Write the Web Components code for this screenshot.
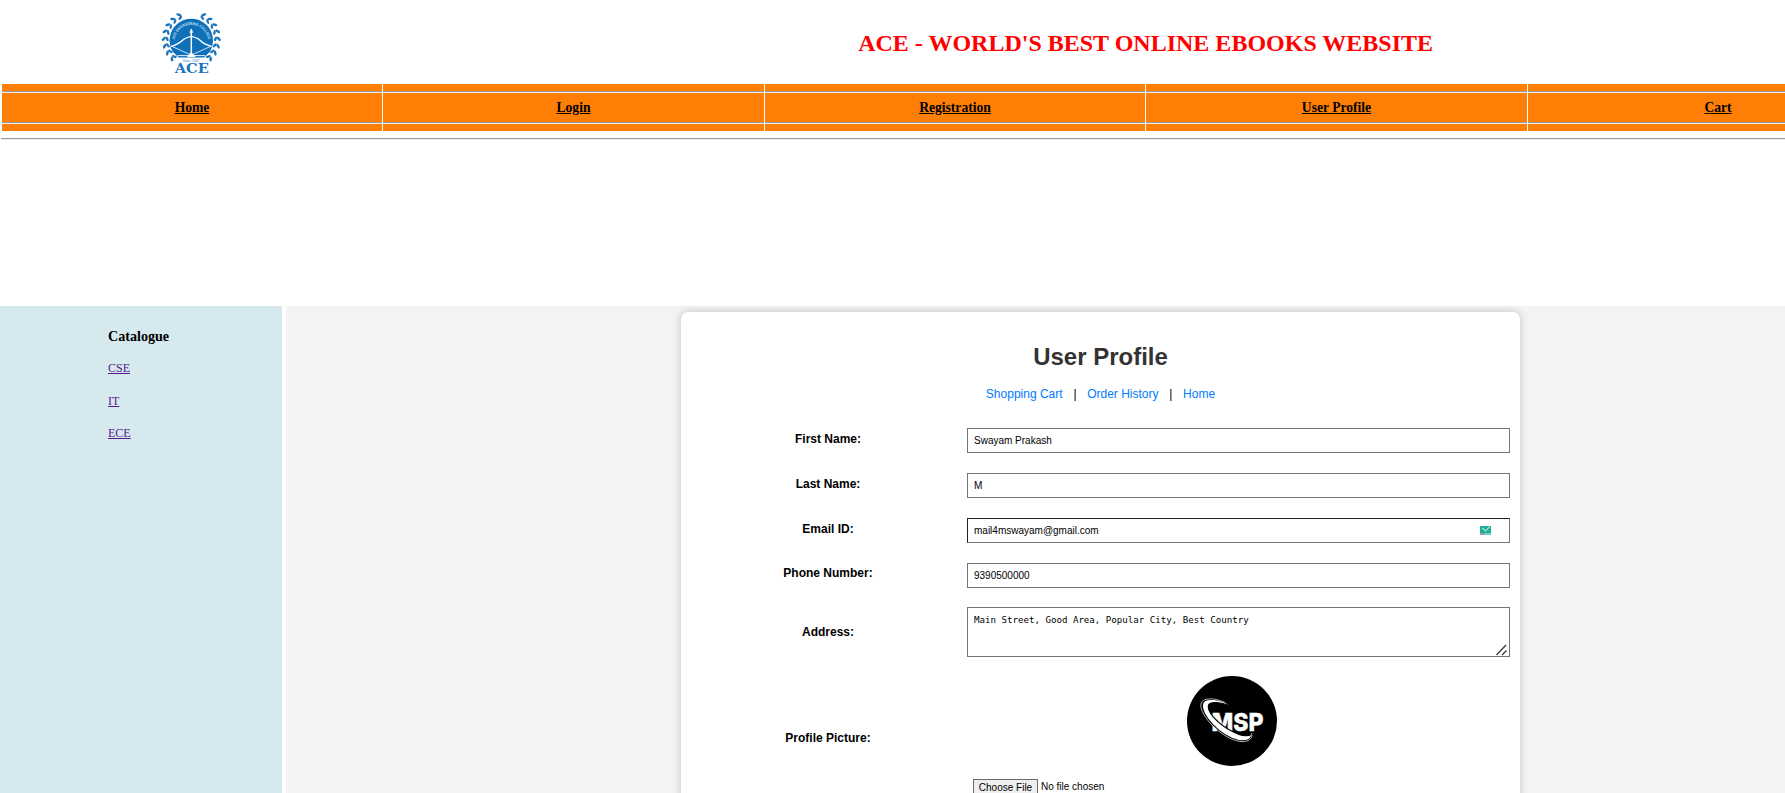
<!DOCTYPE html>
<html lang="en">
<head>
<meta charset="utf-8">
<title>User Profile</title>
<style>
html, body { margin: 0; height: 100%; overflow: hidden; background: #fff; color: #000; font-family: "Liberation Serif", "Times New Roman", serif; }
</style>
</head>
<body>
<ebook-page></ebook-page>
<script>
const define = (name, html) => customElements.define(name, class extends HTMLElement {
  constructor() {
    super();
    const t = document.createElement('template');
    t.innerHTML = typeof html === 'function' ? html(this) : html;
    this.attachShadow({ mode: 'open' }).appendChild(t.content.cloneNode(true));
  }
});

/* College crest: laurel leaves round a blue disc with bow and arrow */
const leaves = (() => {
  let out = '';
  for (let i = 0; i < 8; i++) {
    const deg = 27 + i * 15.5;
    for (const s of [-1, 1]) {
      out += `<g transform="translate(30.3 31.3) rotate(${s * deg})"><ellipse cx="0" cy="-24.2" rx="2.6" ry="1.2" transform="rotate(${s * 28} 0 -24.2)"/><ellipse cx="0" cy="-27.6" rx="2.6" ry="1.3" transform="rotate(${s * -42} 0 -27.6)"/></g>`;
    }
  }
  return out;
})();

define('ace-logo', `
<style>:host{display:block;width:62px;height:70px} svg{display:block;overflow:visible}</style>
<svg width="62" height="70" viewBox="0 0 62 70">
  <g fill="#1a74bb">${leaves}</g>
  <path d="M12 44 A21.7 21.7 0 1 1 48.6 44 L43 49.5 H17.6 Z" fill="#0e70b9"/>
  <path id="arc" d="M13.3 34 A17 17 0 1 1 47.3 34" fill="none"/>
  <text font-family="Liberation Sans, sans-serif" font-weight="bold" font-size="3.9" fill="#c4e0f3"><textPath href="#arc" startOffset="2.5" textLength="48" lengthAdjust="spacingAndGlyphs">ACE ENGINEERING COLLEGE</textPath></text>
  <g fill="none" stroke="#fff" transform="translate(-.5 0)">
    <path d="M30.8 22 V48" stroke-width="1.5"/>
    <path d="M29.3 24.5 L30.8 20.8 L32.3 24.5 Z" fill="#fff" stroke-width=".5"/>
    <path d="M10.5 38.5 C16 36.8 18.5 35.5 21.5 32.8 C24 30 27 29.3 30.8 28.4 C34.6 29.3 37.6 30 40.1 32.8 C42.6 35.5 45.6 36.8 51.1 38.5" stroke-width="1.4"/>
    <path d="M11.5 38.4 L28.7 46.2 M50.1 38.4 L32.9 46.2" stroke-width=".8"/>
    <path d="M17 47.6 H44.6" stroke-width=".9"/>
    <path d="M26.5 49 L30.8 43.5 L35.1 49 Z" fill="#fff" stroke="none"/>
  </g>
  <text x="30.3" y="54.1" text-anchor="middle" textLength="17" font-family="Liberation Serif, serif" font-size="4" fill="#4c91c8">Since 2007</text>
  <text x="13.8" y="65.4" textLength="34" lengthAdjust="spacingAndGlyphs" font-family="DejaVu Serif, serif" font-weight="bold" font-size="12.2" fill="#1b75bb">ACE</text>
</svg>`);

define('site-header', `
<style>
:host{display:grid;grid-template-columns:380.7px 1fr;column-gap:1px;width:1905.5px;height:84px;margin-left:2px}
ace-logo{margin:8px 0 0 158.5px}
h1{margin:0;padding-top:29px;font-size:24px;line-height:28px;color:#f00;text-align:center;font-weight:bold}
</style>
<ace-logo></ace-logo><h1><slot></slot></h1>`);

define('nav-cell', el => `
<style>
:host{display:grid;grid-template-rows:7px 2px 29px 2px 7px;background:#ff7f06;text-align:center}
.rule{background:linear-gradient(#9a9a9a 50%,#eee 50%)}
a{grid-row:3;font-weight:bold;font-size:13.6px;line-height:29px;color:#000;text-decoration:underline}
.a{grid-row:2}.b{grid-row:4}
</style>
<div class="rule a"></div><a href="#"><slot></slot></a><div class="rule b"></div>`);

define('site-nav', `
<style>
:host{display:block}
nav{display:grid;grid-template-columns:380px 381px 380px 381px 380px;column-gap:1px;margin-left:2px}
.line{margin:7px 0 0 1px;height:2px;background:linear-gradient(#9a9a9a 50%,#eee 50%)}
</style>
<nav><slot></slot></nav><div class="line"></div>`);

define('catalogue-menu', `
<style>
:host{display:block;box-sizing:border-box;background:#d6e9ef;padding:22px 0 0 108px}
h3{margin:0 0 16px;font-size:14.1px;line-height:17px;font-weight:bold}
ul{list-style:none;margin:0;padding:0;display:grid;row-gap:18.5px}
li{font-size:12px;line-height:14px}
a{color:#551a8b;text-decoration:underline}
</style>
<h3>Catalogue</h3>
<ul><li><a href="#">CSE</a></li><li><a href="#">IT</a></li><li><a href="#">ECE</a></li></ul>`);

define('form-row', el => `
<style>
:host{display:grid;grid-template-columns:277px 543px;column-gap:0;align-items:start}
label{font-weight:bold;font-size:12px;line-height:14px;text-align:center;padding:var(--label-top,4px) 1px 0 0}
</style>
<label>${el.getAttribute('label')}</label><div><slot></slot></div>`);

define('text-field', el => `
<style>
:host{display:block;position:relative;height:25px}
input{box-sizing:border-box;display:block;width:100%;height:25px;margin:0;padding:0 6px;border:1px solid #767676;border-radius:0;font:10px "Liberation Sans",Arial,sans-serif;color:#000;background:#fff;outline:0}
:host([inset]) input{border-color:#222 #767676 #767676 #222}
::slotted(*){position:absolute;right:18px;top:6px}
</style>
<input type="text" value="${el.getAttribute('value')}"><slot></slot>`);

define('mail-badge', `
<style>:host{display:block} svg{display:block}</style>
<svg width="13" height="13" viewBox="0 0 13 13"><rect width="13" height="13" fill="#fafafa"/><rect x="1" y="2" width="11" height="7" fill="#22ab98"/><path d="M3.2 3.8 L6.5 6.8 L11 2.4" fill="none" stroke="#b9efe7" stroke-width="1.1"/><rect x="1" y="9" width="5" height="2" fill="#929db5"/><rect x="6" y="9" width="6" height="2" fill="#62dcc4"/></svg>`);

define('address-field', el => `
<style>
:host{display:block;position:relative;height:50px}
textarea{box-sizing:border-box;display:block;width:100%;height:50px;margin:0;padding:6px;border:1px solid #767676;border-radius:0;font:9.14px/12px "DejaVu Sans Mono",Consolas,monospace;color:#000;background:#fff;resize:none;overflow:hidden}
svg{position:absolute;right:2px;bottom:1px}
</style>
<textarea>${el.getAttribute('value')}</textarea>
<svg width="13" height="13" viewBox="0 0 13 13"><path d="M1.5 12 L11 2 M7 12 L11.5 7.5" stroke="#444" stroke-width="1.5" fill="none"/></svg>`);

define('profile-picture', `
<style>:host{display:block;width:90px;height:90px} svg{display:block}</style>
<svg width="90" height="90" viewBox="0 0 90 90">
  <circle cx="45" cy="45" r="45" fill="#000"/>
  <text x="24.6" y="55.4" textLength="52" lengthAdjust="spacingAndGlyphs" font-family="Inter, Liberation Sans, sans-serif" font-weight="800" font-size="25" fill="#fff" stroke="#fff" stroke-width=".4">MSP</text>
  <path d="M47 31 C33 22.5 17 20.5 15.5 28 C13.5 39 33 60 51 64.2 C60 66 65 63 64.5 58 C60 62 50 58.5 40 52.5 C29 45.5 19.5 35 21.5 29 C24 24.5 34 26.5 47 31 Z" fill="#fff" stroke="#000" stroke-width="1.1"/>
  <path d="M38 26.5 C25 20.5 13 22 13.8 30 C15.5 44 38 64 54 65.6 C62 66 66 62.5 64.5 57" fill="none" stroke="#ddd" stroke-width=".8"/>
</svg>`);

define('file-picker', `
<style>
:host{display:flex;align-items:flex-start;font:10px/12px "Liberation Sans",Arial,sans-serif}
button{box-sizing:border-box;width:65px;height:18px;margin:0 3px 0 0;padding:0;border:1px solid #6b6b6b;background:#efefef;font:inherit;color:#000;line-height:14px;white-space:nowrap}
span{padding-top:2px}
</style>
<button type="button">Choose File</button><span>No file chosen</span>`);

define('profile-card', `
<style>
:host{display:block;box-sizing:border-box;width:839px;height:560px;background:#fff;border-radius:7px;box-shadow:0 0 9px rgba(0,0,0,.2);padding:31px 9px 0;font-family:"Liberation Sans",Arial,sans-serif}
h2{margin:0;font-size:24px;line-height:28px;text-align:center;color:#333}
nav{display:flex;justify-content:center;gap:10.8px;margin:16px 0 27px;font-size:12px;line-height:14px}
nav span{width:3px}
form{display:block}
form-row{margin-bottom:20px}
.phone{--label-top:3px;margin-bottom:19px}
.addr{--label-top:18px;margin-bottom:19px}
.pic{--label-top:55px}
nav a{color:#007bff;text-decoration:none}
profile-picture{margin:0 0 13px 220px}
file-picker{margin-left:6px}
</style>
<h2>User Profile</h2>
<nav><a href="#">Shopping Cart</a><span>|</span><a href="#">Order History</a><span>|</span><a href="#">Home</a></nav>
<form>
<form-row label="First Name:"><text-field value="Swayam Prakash"></text-field></form-row>
<form-row label="Last Name:"><text-field value="M"></text-field></form-row>
<form-row label="Email ID:"><text-field inset value="mail4mswayam@gmail.com"><mail-badge></mail-badge></text-field></form-row>
<form-row class="phone" label="Phone Number:"><text-field value="9390500000"></text-field></form-row>
<form-row class="addr" label="Address:"><address-field value="Main Street, Good Area, Popular City, Best Country"></address-field></form-row>
<form-row class="pic" label="Profile Picture:"><profile-picture></profile-picture><file-picker></file-picker></form-row>
</form>`);

define('ebook-page', `
<style>
:host{display:flex;flex-direction:column;height:793px;overflow:hidden}
main{display:grid;grid-template-columns:282px 1fr;column-gap:4px;margin-top:166px;flex:1;min-height:0}
section{background:#f3f3f3;overflow:hidden;padding:6px 0 0 395px}
</style>
<site-header>ACE - WORLD'S BEST ONLINE EBOOKS WEBSITE</site-header>
<site-nav><nav-cell>Home</nav-cell><nav-cell>Login</nav-cell><nav-cell>Registration</nav-cell><nav-cell>User Profile</nav-cell><nav-cell>Cart</nav-cell></site-nav>
<main><catalogue-menu></catalogue-menu><section><profile-card></profile-card></section></main>`);
</script>
</body>
</html>
